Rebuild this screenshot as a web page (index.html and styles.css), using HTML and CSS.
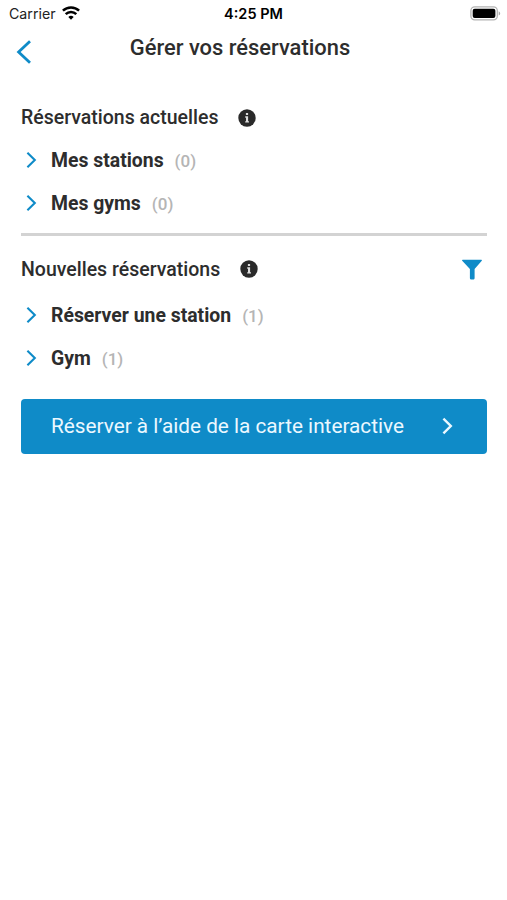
FILE: index.html
```html
<!DOCTYPE html>
<html lang="fr">
<head>
    <meta charset="UTF-8">
    <meta name="viewport" content="width=device-width, initial-scale=1.0">
    <title>Gérer vos réservations</title>
    <link rel="stylesheet" href="styles.css">
</head>
<body>

<div class="status-bar">
    <div class="carrier">
        <span>Carrier</span>
        <svg class="wifi" width="18" height="14" viewBox="0 0 18 14" fill="none" stroke="#000" stroke-width="2.5">
            <path d="M.9 4.7a11.8 11.8 0 0 1 16.2 0"/>
            <path d="M3.7 8.2a7.6 7.6 0 0 1 10.6 0"/>
            <path d="M9 13.7l-2.7-2.8a4 4 0 0 1 5.4 0z" fill="#000" stroke="none"/>
        </svg>
    </div>
    <span class="time">4:25 PM</span>
    <svg class="battery" width="31" height="15" viewBox="0 0 31 15">
        <rect x="0.9" y="0.9" width="26.4" height="13" rx="3.8" fill="#fff" stroke="#b3b3b3" stroke-width="1.3"/>
        <rect x="2.7" y="2.8" width="22.7" height="9.3" rx="2" fill="#000"/>
        <path d="M28.7 5.2c2 .8 2 3.6 0 4.4z" fill="#a8a8a8"/>
    </svg>
</div>

<header class="header">
    <button class="back-btn" aria-label="Retour">
        <svg width="16" height="26" viewBox="0 0 16 26" fill="none" stroke="#0f8bc8" stroke-width="2.8">
            <path d="M14 2.2L2.6 13 14 23.8"/>
        </svg>
    </button>
    <h1>Gérer vos réservations</h1>
</header>

<main class="content">
    <section class="current">
        <div class="section-title">
            <h2>Réservations actuelles</h2>
            <svg class="info" width="18" height="18" viewBox="0 0 18 18">
                <circle cx="9" cy="9" r="8.7" fill="#2a2a2a"/>
                <path d="M7.9 3.9h2.2V6H7.9zM7.2 7.3h2.9v4.9h.9v1.4H7.2v-1.4H8V8.7h-.8z" fill="#ddd"/>
            </svg>
        </div>
        <div class="item">
            <svg class="chevron" width="11" height="18" viewBox="0 0 11 18"><path d="M1.4 1.7L8.8 9l-7.4 7.3"/></svg>
            <span class="label">Mes stations</span>
            <span class="count">(0)</span>
        </div>
        <div class="item">
            <svg class="chevron" width="11" height="18" viewBox="0 0 11 18"><path d="M1.4 1.7L8.8 9l-7.4 7.3"/></svg>
            <span class="label">Mes gyms</span>
            <span class="count">(0)</span>
        </div>
    </section>

    <section class="new">
        <div class="section-title">
            <h2>Nouvelles réservations</h2>
            <svg class="info" width="18" height="18" viewBox="0 0 18 18">
                <circle cx="9" cy="9" r="8.7" fill="#2a2a2a"/>
                <path d="M7.9 3.9h2.2V6H7.9zM7.2 7.3h2.9v4.9h.9v1.4H7.2v-1.4H8V8.7h-.8z" fill="#ddd"/>
            </svg>
            <svg class="filter" width="20" height="21" viewBox="0 0 20 21">
                <path d="M0.6 0.8h18.8c.5 0 .6.6.4 1L12.6 10v9c0 1-.7 1.6-1.6 1.6h-1.4c-1 0-1.7-.6-1.7-1.6v-9L.2 1.8c-.3-.4-.1-1 .4-1z" fill="#0f8bc8"/>
            </svg>
        </div>
        <div class="item">
            <svg class="chevron" width="11" height="18" viewBox="0 0 11 18"><path d="M1.4 1.7L8.8 9l-7.4 7.3"/></svg>
            <span class="label">Réserver une station</span>
            <span class="count">(1)</span>
        </div>
        <div class="item">
            <svg class="chevron" width="11" height="18" viewBox="0 0 11 18"><path d="M1.4 1.7L8.8 9l-7.4 7.3"/></svg>
            <span class="label">Gym</span>
            <span class="count">(1)</span>
        </div>
    </section>

    <button class="map-btn">
        <span>Réserver à l’aide de la carte interactive</span>
        <svg class="chevron" width="11" height="18" viewBox="0 0 11 18"><path d="M1.4 1.7L8.8 9l-7.4 7.3"/></svg>
    </button>
</main>

</body>
</html>
```
FILE: styles.css
```css
* {
    box-sizing: border-box;
}

body {
    font-family: Roboto, sans-serif;
    margin: 0;
    background-color: #fff;
    color: #2d2d2d;
}

h1,
h2 {
    margin: 0;
    font-weight: 500;
}

svg {
    display: block;
    flex-shrink: 0;
}

button {
    border: none;
    padding: 0;
    font-family: inherit;
    cursor: pointer;
}

/* Barre d'état */
.status-bar {
    display: grid;
    grid-template-columns: 1fr auto 1fr;
    align-items: center;
    height: 27px;
    padding: 0 6px 0 9px;
    font-family: Inter, sans-serif;
    font-size: 14.2px;
    color: #222;
}

.carrier {
    display: flex;
    align-items: center;
    gap: 6px;
}

.wifi {
    margin-bottom: 2px;
}

.time {
    font-size: 14.5px;
    font-weight: 600;
    color: #000;
    padding-right: 3px;
}

.battery {
    justify-self: end;
}

/* En-tête */
.header {
    display: grid;
    grid-template-columns: 60px 1fr 103px;
    align-items: center;
    height: 50px;
    padding-left: 16px;
}

.back-btn {
    background: none;
    justify-self: start;
}

.header h1 {
    font-size: 21.9px;
    text-align: center;
    padding-bottom: 9px;
}

/* Contenu */
.content {
    padding: 19px 20px 0 21px;
}

.current {
    height: 140px;
    border-bottom: 3px solid #d3d3d3;
}

.section-title {
    display: flex;
    align-items: center;
    height: 43px;
}

.section-title h2 {
    font-size: 19.5px;
}

.info {
    margin-left: 20px;
}

.filter {
    margin-left: auto;
    margin-right: 5px;
}

.item {
    display: flex;
    align-items: center;
    height: 43px;
    padding-left: 5px;
}

.chevron {
    fill: none;
    stroke: #0f8bc8;
    stroke-width: 2.1;
}

.item .chevron {
    margin-bottom: 1px;
}

.label {
    margin-left: 14px;
    font-size: 19.4px;
    font-weight: 700;
}

.count {
    margin-left: 11px;
    font-size: 17px;
    font-weight: 500;
    color: #b5b5b5;
}

.new {
    padding-top: 11px;
}

.new .section-title {
    height: 44px;
    margin-bottom: 3px;
}

.map-btn {
    display: flex;
    align-items: center;
    justify-content: space-between;
    width: 100%;
    height: 55px;
    margin-top: 19px;
    padding: 0 34px 1px 30px;
    border-radius: 4px;
    background-color: #0f8bc8;
    color: #ebf8ff;
    font-size: 20.75px;
}

.map-btn .chevron {
    stroke: #ebf8ff;
    stroke-width: 2.4;
}
```
